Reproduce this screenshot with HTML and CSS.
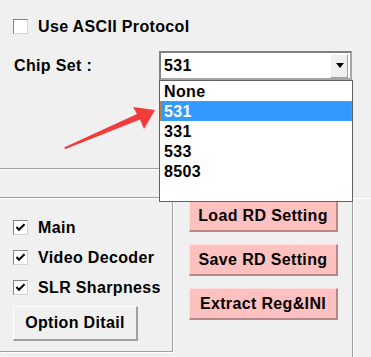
FILE: index.html
```html
<!DOCTYPE html>
<html lang="en">
<head>
  <meta charset="UTF-8" />
  <title>Chip Set Options</title>
  <link rel="stylesheet" href="styles.css">
</head>
<body>
  <div class="window">
    <div class="top">
      <div class="check-row">
        <span class="check"></span>
        <span class="check-label">Use ASCII Protocol</span>
      </div>

      <div class="chip-row">
        <span class="chip-label">Chip Set :</span>
        <div class="combo">
          <span class="combo-value">531</span>
          <span class="combo-button"><span class="combo-arrow"></span></span>
        </div>
      </div>
    </div>

    <div class="band"></div>

    <div class="panels">
      <div class="panel-left">
        <div class="check-row">
          <span class="check checked">
            <svg width="11" height="11" viewBox="0 0 11 11"><polyline points="1.5,5 4,7.8 9.5,2.2" fill="none" stroke="#000" stroke-width="2"/></svg>
          </span>
          <span class="check-label">Main</span>
        </div>
        <div class="check-row">
          <span class="check checked">
            <svg width="11" height="11" viewBox="0 0 11 11"><polyline points="1.5,5 4,7.8 9.5,2.2" fill="none" stroke="#000" stroke-width="2"/></svg>
          </span>
          <span class="check-label">Video Decoder</span>
        </div>
        <div class="check-row">
          <span class="check checked">
            <svg width="11" height="11" viewBox="0 0 11 11"><polyline points="1.5,5 4,7.8 9.5,2.2" fill="none" stroke="#000" stroke-width="2"/></svg>
          </span>
          <span class="check-label">SLR Sharpness</span>
        </div>
        <button class="btn">Option Ditail</button>
      </div>

      <div class="panel-right">
        <button class="btn btn-pink">Load RD Setting</button>
        <button class="btn btn-pink">Save RD Setting</button>
        <button class="btn btn-pink">Extract Reg&amp;INI</button>
      </div>
    </div>

    <!-- open dropdown of the chip set combo -->
    <ul class="dropdown">
      <li>None</li>
      <li class="selected">531</li>
      <li>331</li>
      <li>533</li>
      <li>8503</li>
    </ul>

    <!-- annotation arrow -->
    <svg class="arrow" width="371" height="357" viewBox="0 0 371 357">
      <polygon points="64,147.5 137,114 133,107 155,110 144,129 140,119.5 65.5,149" fill="#f23c3c"/>
    </svg>
  </div>
</body>
</html>
```

FILE: styles.css
```css
:root {
  --face: #f0f0f0;
  --shadow: #a0a0a0;
  --dark: #696969;
  --highlight: #3399ff;
  --pink: #ffc0c0;
}

body {
  margin: 0;
  background: var(--face);
  font-family: 'Liberation Sans', Arial, sans-serif;
  font-weight: bold;
  font-size: 16px;
  letter-spacing: 0.35px;
  color: #000;
}

.window {
  position: relative;
  width: 371px;
  height: 357px;
  overflow: hidden;
}

.top {
  height: 168px;
  padding: 19px 0 0 13px;
  box-sizing: border-box;
}

.check-row {
  display: flex;
  align-items: center;
  height: 15px;
}

.check {
  width: 15px;
  height: 15px;
  box-sizing: border-box;
  background: #fff;
  border: 1px solid #d4d4d4;
  border-top-color: #848484;
  border-left-color: #848484;
  display: flex;
  align-items: center;
  justify-content: center;
}

.check-label {
  margin-left: 10px;
  line-height: 18px;
}

.chip-row {
  display: flex;
  align-items: center;
  margin-top: 17px;
}

.chip-label {
  width: 145px;
  margin-left: 1px;
  line-height: 18px;
}

.combo {
  width: 193px;
  height: 29px;
  box-sizing: border-box;
  border: 2px solid #a6a6a6;
  border-top-color: #808080;
  border-left-color: #808080;
  background: #fff;
  display: flex;
  align-items: center;
}

.combo-value {
  flex: 1;
  padding-left: 3px;
  line-height: 25px;
}

.combo-button {
  width: 18px;
  height: 24px;
  margin-right: 2px;
  box-sizing: border-box;
  background: var(--face);
  border: 1px solid #fff;
  border-right-color: var(--shadow);
  border-bottom-color: var(--shadow);
  display: flex;
  align-items: center;
  justify-content: center;
}

.combo-arrow {
  width: 0;
  height: 0;
  border-left: 4px solid transparent;
  border-right: 4px solid transparent;
  border-top: 5px solid #000;
  margin-left: 1px;
}

.band {
  width: 353px;
  height: 28px;
  border-top: 1px solid var(--shadow);
  border-bottom: 1px solid var(--shadow);
  box-shadow: inset 0 1px 0 #fff;
}

.panels {
  display: flex;
  height: 160px;
  border-top: 1px solid #fff;
  box-sizing: border-box;
}

.panel-left {
  width: 173px;
  height: 153px;
  box-sizing: border-box;
  padding: 21px 0 0 13px;
  border-right: 1px solid var(--shadow);
  border-bottom: 1px solid var(--shadow);
  box-shadow: 1px 1px 0 #fff;
  display: flex;
  flex-direction: column;
  gap: 15px;
}

.panel-right {
  width: 180px;
  box-sizing: border-box;
  padding: 1px 0 0 16px;
  border-right: 1px solid var(--shadow);
  box-shadow: 1px 0 0 #fff;
  display: flex;
  flex-direction: column;
  gap: 12px;
}

.btn {
  font: inherit;
  letter-spacing: inherit;
  color: #000;
  padding: 0;
  background: var(--face);
  border: 1px solid #fff;
  border-right: 2px solid var(--shadow);
  border-bottom: 2px solid var(--shadow);
  box-sizing: border-box;
}

.panel-left .btn {
  width: 125px;
  height: 35px;
  margin-top: -4px;
}

.btn-pink {
  width: 149px;
  height: 32px;
  background: var(--pink);
  border-color: #ffdcdc;
  border-right-color: #b88888;
  border-bottom-color: #b88888;
}

.dropdown {
  position: absolute;
  left: 159px;
  top: 80px;
  width: 194px;
  height: 122px;
  box-sizing: border-box;
  margin: 0;
  padding: 0;
  list-style: none;
  background: #fff;
  border: 1px solid #646464;
}

.dropdown li {
  height: 20px;
  line-height: 20px;
  padding: 1px 0 0 4px;
  box-sizing: border-box;
}

.dropdown li.selected {
  background: var(--highlight);
  color: #fff;
  outline: 1px dotted #c8843c;
  outline-offset: -1px;
}

.arrow {
  position: absolute;
  left: 0;
  top: 0;
  pointer-events: none;
}
```
